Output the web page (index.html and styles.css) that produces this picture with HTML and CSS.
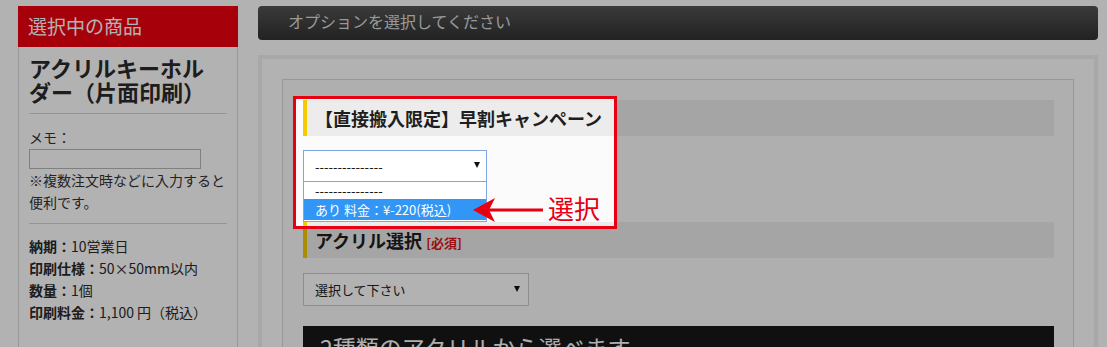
FILE: index.html
```html
<!DOCTYPE html>
<html lang="ja">
<head>
<meta charset="utf-8">
<title>オプション選択</title>
<link rel="stylesheet" href="styles.css">
</head>
<body>
<div class="page">
  <aside class="side">
    <div class="side-head">選択中の商品</div>
    <div class="side-body">
      <h2 class="prod-title">アクリルキーホルダー（片面印刷）</h2>
      <hr class="rule">
      <div class="memo-label">メモ：</div>
      <input class="memo-input" type="text">
      <p class="memo-note">※複数注文時などに入力すると便利です。</p>
      <hr class="rule rule-2">
      <ul class="specs">
        <li><b>納期：</b>10営業日</li>
        <li><b>印刷仕様：</b>50×50mm以内</li>
        <li><b>数量：</b>1個</li>
        <li><b>印刷料金：</b>1,100 円（税込）</li>
      </ul>
    </div>
  </aside>

  <main class="main">
    <div class="bar">オプションを選択してください</div>
    <div class="outer">
      <div class="inner">
        <div class="highlight">
          <svg class="arrow" width="72" height="28" viewBox="0 0 72 28">
            <path d="M0 14 L22 2 L16 14 L22 26 Z" fill="#e60012"/>
            <line x1="15" y1="14" x2="70" y2="14" stroke="#e60012" stroke-width="3"/>
          </svg>
          <span class="note">選択</span>
        </div>

        <section class="opt opt-1">
          <h3 class="opt-head">【直接搬入限定】早割キャンペーン</h3>
          <div class="sel sel-open">
            <span>---------------</span><i class="caret"></i>
            <ul class="sel-list">
              <li>---------------</li>
              <li class="on">あり 料金：¥-220(税込)</li>
            </ul>
          </div>
        </section>

        <section class="opt opt-2">
          <h3 class="opt-head">アクリル選択 <span class="req">[必須]</span></h3>
          <div class="sel sel-wide">
            <span>選択して下さい</span><i class="caret"></i>
          </div>
        </section>

        <div class="banner">2種類のアクリルから選べます</div>
      </div>
    </div>
  </main>
</div>
</body>
</html>
```

FILE: styles.css
```css
html, body {
  margin: 0;
  padding: 0;
  overflow: hidden;
  height: 347px;
  background: #ffffff;
}
body {
  font-family: "Noto Sans CJK JP", "Noto Sans", sans-serif;
  color: #333;
}
.page {
  display: flex;
  align-items: flex-start;
  padding: 6px 0 0 18px;
  gap: 20px;
}

/* left panel */
.side {
  width: 220px;
  flex: none;
}
.side-head {
  background: #ee0011;
  color: #fff;
  font-size: 19px;
  line-height: 39px;
  height: 41px;
  box-sizing: border-box;
  padding: 0 0 2px 10px;
}
.side-body {
  border-left: 1px solid #dadada;
  border-right: 1px solid #dadada;
  padding: 8px 10px 40px;
  height: 400px;
}
.prod-title {
  margin: 0 4px 0 0;
  font-size: 22px;
  line-height: 24px;
  font-weight: bold;
  color: #2a2a2a;
}
.rule {
  border: 0;
  border-top: 1px solid #d6d6d6;
  margin: 10px 0 0;
  height: 0;
}
.memo-label {
  margin-top: 12px;
  font-size: 14px;
  line-height: 22px;
}
.memo-input {
  display: block;
  margin: 1px 0 0;
  width: 172px;
  height: 20px;
  box-sizing: border-box;
  border: 1px solid #b8b8b8;
  background: #fff;
  padding: 0;
}
.memo-note {
  margin: 0;
  font-size: 14px;
  line-height: 22px;
}
.rule-2 { margin-top: 10px; }
.specs {
  list-style: none;
  margin: 11px 0 0;
  padding: 0;
  font-size: 14px;
  line-height: 22px;
  color: #2a2a2a;
}
.specs b { font-weight: bold; }

/* main */
.main {
  width: 840px;
  flex: none;
}
.bar {
  height: 34px;
  box-sizing: border-box;
  border-radius: 4px;
  background: linear-gradient(#545454, #313131);
  color: #dcdcdc;
  font-size: 16px;
  line-height: 31px;
  padding: 0 0 3px 30px;
}
.outer {
  margin-top: 15px;
  border: 4px solid #f1f1f1;
  padding: 20px;
  height: 400px;
}
.inner {
  position: relative;
  border: 1px solid #dadada;
  background: #fbfbfb;
  padding: 20px 19px 40px 20px;
  height: 400px;
}
.highlight {
  position: absolute;
  left: 10px;
  top: 16px;
  width: 324px;
  height: 133px;
  box-sizing: border-box;
  border: 3px solid #e60012;
  box-shadow: 0 0 0 3000px rgba(0, 0, 0, 0.3);
  z-index: 5;
}
.arrow {
  position: absolute;
  left: 177px;
  top: 97px;
}
.note {
  position: absolute;
  left: 252px;
  top: 95px;
  font-size: 26px;
  line-height: 28px;
  color: #e60012;
}

.opt-head {
  margin: 0;
  height: 36px;
  box-sizing: border-box;
  background: #ececec;
  border-left: 4px solid #f6ca00;
  padding-left: 8px;
  font-size: 18px;
  line-height: 36px;
  font-weight: bold;
  color: #1e1e1e;
}
.req {
  font-size: 13px;
  color: #e01515;
  font-weight: bold;
}
.opt-1 { margin-bottom: 40px; }

.sel {
  position: relative;
  margin-top: 14px;
  width: 184px;
  height: 32px;
  box-sizing: border-box;
  border: 1px solid #7fa6e4;
  background: #fff;
  display: flex;
  align-items: center;
  justify-content: space-between;
  padding: 0 6px 0 11px;
  font-size: 13px;
  color: #111;
}
.caret {
  width: 0;
  height: 0;
  border-left: 3.5px solid transparent;
  border-right: 3.5px solid transparent;
  border-top: 6px solid #111;
  margin-top: -2px;
}
.sel-list {
  position: absolute;
  left: -1px;
  top: 31px;
  width: 184px;
  box-sizing: border-box;
  margin: 0;
  padding: 0 0 1px;
  list-style: none;
  background: #fff;
  border: 1px solid #7fa6e4;
  border-top: 0;
}
.sel-list li {
  padding-left: 11px;
  height: 17px;
  line-height: 17px;
  font-size: 13px;
  color: #111;
}
.sel-list li.on {
  height: 21px;
  line-height: 21px;
  background: #3196f6;
  color: #fff;
}
.sel-wide {
  margin-top: 15px;
  width: 226px;
  height: 33px;
  border-color: #cccccc;
  padding-right: 8px;
  color: #222;
}
.banner {
  margin-top: 20px;
  background: #181818;
  color: #fafafa;
  font-size: 23px;
  line-height: 32px;
  padding: 5px 17px;
  height: 60px;
}
```
